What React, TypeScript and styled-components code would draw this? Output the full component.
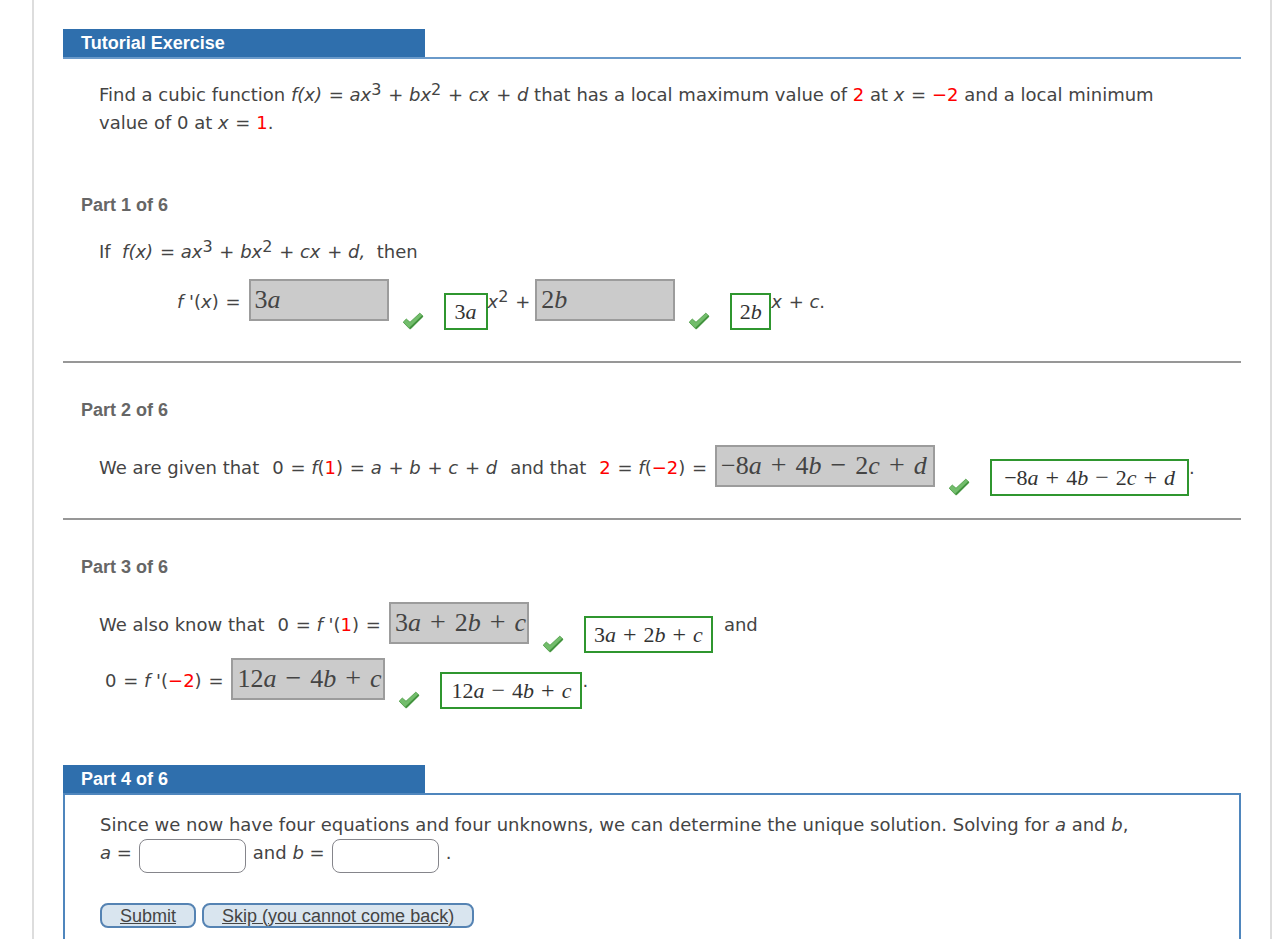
import React from "react";
import styled, { createGlobalStyle } from "styled-components";

const GlobalStyle = createGlobalStyle`
  *, *::before, *::after { box-sizing: border-box; }
  body {
    margin: 0;
    background: #fff;
    color: #444;
    font-family: "DejaVu Sans", Verdana, sans-serif;
    font-size: 18px;
    line-height: 28px;
  }
  sup {
    font-size: 16px;
    line-height: 0;
    vertical-align: 6px;
  }
`;

const Page = styled.main`
  min-height: 100vh;
  margin: 0 12px 0 32px;
  padding: 29px 29px 0;
  border: solid #ddd;
  border-width: 0 2px;
`;

const BarHeading = styled.h2`
  width: 362px;
  height: 28px;
  margin: 0;
  padding: 0 18px;
  background: #2f6fad;
  color: #fff;
  font: bold 18px/28px "Liberation Sans", Arial, sans-serif;
`;

const Statement = styled.section`
  border-top: 2px solid #6a9aca;
  padding: 22px 60px 54px 36px;
`;

const Paragraph = styled.p`
  margin: 0;
`;

const Part = styled.section<{ $bottom: number; $ruled?: boolean }>`
  padding-bottom: ${(p) => p.$bottom}px;
  margin-bottom: ${(p) => (p.$ruled ? 33 : 0)}px;
  border-bottom: ${(p) => (p.$ruled ? 2 : 0)}px solid #979797;
`;

const PartHeading = styled.h3`
  margin: 0;
  padding: 0 18px;
  color: #666;
  font: bold 18px/28px "Liberation Sans", Arial, sans-serif;
`;

const PartBody = styled.div<{ $top: number }>`
  padding: ${(p) => p.$top}px 36px 0;
`;

const Row = styled.div<{ $indent?: number }>`
  display: flex;
  align-items: flex-start;
  height: 51px;
  margin-left: ${(p) => p.$indent ?? 0}px;
  white-space: nowrap;

  & + & {
    margin-top: 5px;
  }

  p + & {
    margin-top: 13px;
  }
`;

const Text = styled.span<{ $before?: number; $after?: number }>`
  display: flex;
  gap: 13px;
  line-height: 46px;
  margin-left: ${(p) => p.$before ?? 0}px;
  margin-right: ${(p) => p.$after ?? 8}px;
`;

const Red = styled.span`
  color: #f00;
`;

const Sign = styled.span`
  margin-left: 1px;
`;

const MathText = styled.span<{ $size: number }>`
  display: inline-flex;
  align-items: baseline;
  font-family: "Liberation Serif", "Times New Roman", serif;
  font-size: ${(p) => p.$size}px;
`;

const Op = styled.span<{ $size: number; $gap: number }>`
  margin: 0 ${(p) => p.$gap}px;
  font-size: ${(p) => p.$size}px;
  line-height: 28px;
`;

const Response = styled.span<{ $width: number }>`
  width: ${(p) => p.$width}px;
  height: 42px;
  padding-left: 4px;
  border: 2px solid #9c9c9c;
  background: #cbcbcb;
  line-height: 38px;
`;

const Key = styled.span<{ $width: number }>`
  display: flex;
  align-items: center;
  justify-content: center;
  align-self: flex-end;
  width: ${(p) => p.$width}px;
  height: 37px;
  border: 2px solid #2f962f;
  color: #333;
`;

const Tick = styled.svg`
  align-self: flex-end;
  width: 22px;
  height: 18px;
  margin: 0 20px 0 13px;
`;

const Panel = styled.form`
  border: 2px solid #4f86bd;
  border-bottom: 0;
  min-height: 148px;
  padding: 16px 35px 12px;
`;

const AnswerLine = styled.div`
  display: flex;
  align-items: flex-start;
`;

const NumberInput = styled.input`
  width: 107px;
  height: 34px;
  margin: 0 7px;
  padding: 0 6px;
  border: 1px solid #85858b;
  border-radius: 8px;
  background: #fff;
  font: 18px "DejaVu Sans", sans-serif;
`;

const Buttons = styled.div`
  display: flex;
  gap: 6px;
  margin-top: 30px;
`;

const Button = styled.button`
  height: 25px;
  padding: 0 18px;
  border: 2px solid #5583b3;
  border-radius: 8px;
  background: #d9e5ef;
  color: #444;
  font: 18px/20px "Liberation Sans", Arial, sans-serif;
  text-decoration: underline;
`;

/* Numbers and operators are upright, variables are italic. */
function Formula({ text, size, gap }: { text: string; size: number; gap: number }) {
  return (
    <MathText $size={size}>
      {text.split(" ").map((token, i) =>
        token === "+" || token === "−" ? (
          <Op key={i} $size={size + 2} $gap={gap}>
            {token}
          </Op>
        ) : (
          <span key={i}>
            {token.slice(0, -1)}
            <i>{token.slice(-1)}</i>
          </span>
        )
      )}
    </MathText>
  );
}

function Answer({ text, width, keyWidth }: { text: string; width: number; keyWidth: number }) {
  return (
    <>
      <Response $width={width}>
        <Formula text={text} size={26} gap={9} />
      </Response>
      <Tick viewBox="0 0 22 18" role="img" aria-label="Correct">
        <path
          d="M1.2 10.2 4.3 7.1 8 10.3 17.8 1.2 21 4.2 8.6 16.8H7.6Z"
          fill="#72bd6b"
          stroke="#5aa553"
          strokeWidth="1"
          strokeLinejoin="round"
        />
        <path d="M7.8 16.4 20.6 4.1" fill="none" stroke="#41913d" strokeWidth="1.6" />
      </Tick>
      <Key $width={keyWidth}>
        <Formula text={text} size={22} gap={7} />
      </Key>
    </>
  );
}

const Plus = () => (
  <>
    {" "}
    <Sign>+</Sign>{" "}
  </>
);

const Equals = () => (
  <>
    {" "}
    <Sign>=</Sign>{" "}
  </>
);

function Cubic() {
  return (
    <>
      <i>f(x)</i>
      <Equals />
      <i>ax</i>
      <sup>3</sup>
      <Plus />
      <i>bx</i>
      <sup>2</sup>
      <Plus />
      <i>cx</i>
      <Plus />
      <i>d</i>
    </>
  );
}

export default function App() {
  return (
    <>
      <GlobalStyle />
      <Page>
        <BarHeading>Tutorial Exercise</BarHeading>
        <Statement>
          <Paragraph>
            Find a cubic function <Cubic /> that has a local maximum value of <Red>2</Red> at <i>x</i>
            <Equals />
            <Red>−2</Red> and a local minimum value of 0 at <i>x</i>
            <Equals />
            <Red>1</Red>.
          </Paragraph>
        </Statement>

        <Part $bottom={31} $ruled>
          <PartHeading>Part 1 of 6</PartHeading>
          <PartBody $top={19}>
            <Paragraph>
              If&nbsp; <Cubic />
              <i>,</i>&nbsp; then
            </Paragraph>
            <Row $indent={78}>
              <Text>
                <span>
                  <i>f '</i>(<i>x</i>)
                  <Equals />
                </span>
              </Text>
              <Answer text="3a" width={140} keyWidth={44} />
              <Text $after={5}>
                <span>
                  <i>x</i>
                  <sup>2</sup>
                  <Plus />
                </span>
              </Text>
              <Answer text="2b" width={140} keyWidth={41} />
              <Text>
                <span>
                  <i>x</i>
                  <Plus />
                  <i>c</i>.
                </span>
              </Text>
            </Row>
          </PartBody>
        </Part>

        <Part $bottom={22} $ruled>
          <PartHeading>Part 2 of 6</PartHeading>
          <PartBody $top={21}>
            <Row>
              <Text>
                <span>We are given that</span>
                <span>
                  0<Equals />
                  <i>f</i>(<Red>1</Red>)<Equals />
                  <i>a</i>
                  <Plus />
                  <i>b</i>
                  <Plus />
                  <i>c</i>
                  <Plus />
                  <i>d</i>
                </span>
                <span>and that</span>
                <span>
                  <Red>2</Red>
                  <Equals />
                  <i>f</i>(<Red>−2</Red>)<Equals />
                </span>
              </Text>
              <Answer text="−8a + 4b − 2c + d" width={220} keyWidth={199} />
              <Text>.</Text>
            </Row>
          </PartBody>
        </Part>

        <Part $bottom={56}>
          <PartHeading>Part 3 of 6</PartHeading>
          <PartBody $top={21}>
            <Row>
              <Text>
                <span>We also know that</span>
                <span>
                  0<Equals />
                  <i>f '</i>(<Red>1</Red>)<Equals />
                </span>
              </Text>
              <Answer text="3a + 2b + c" width={140} keyWidth={129} />
              <Text $before={11}>and</Text>
            </Row>
            <Row $indent={6}>
              <Text>
                <span>
                  0<Equals />
                  <i>f '</i>(<Red>−2</Red>)<Equals />
                </span>
              </Text>
              <Answer text="12a − 4b + c" width={154} keyWidth={142} />
              <Text>.</Text>
            </Row>
          </PartBody>
        </Part>

        <BarHeading>Part 4 of 6</BarHeading>
        <Panel onSubmit={(e: React.FormEvent) => e.preventDefault()}>
          <Paragraph>
            Since we now have four equations and four unknowns, we can determine the unique solution. Solving for{" "}
            <i>a</i> and <i>b</i>,
          </Paragraph>
          <AnswerLine>
            <label htmlFor="value-a">
              <i>a</i> =
            </label>
            <NumberInput id="value-a" type="text" />
            <label htmlFor="value-b">
              and <i>b</i> =
            </label>
            <NumberInput id="value-b" type="text" />
            <span>.</span>
          </AnswerLine>
          <Buttons>
            <Button type="submit">Submit</Button>
            <Button type="button">Skip (you cannot come back)</Button>
          </Buttons>
        </Panel>
      </Page>
    </>
  );
}
